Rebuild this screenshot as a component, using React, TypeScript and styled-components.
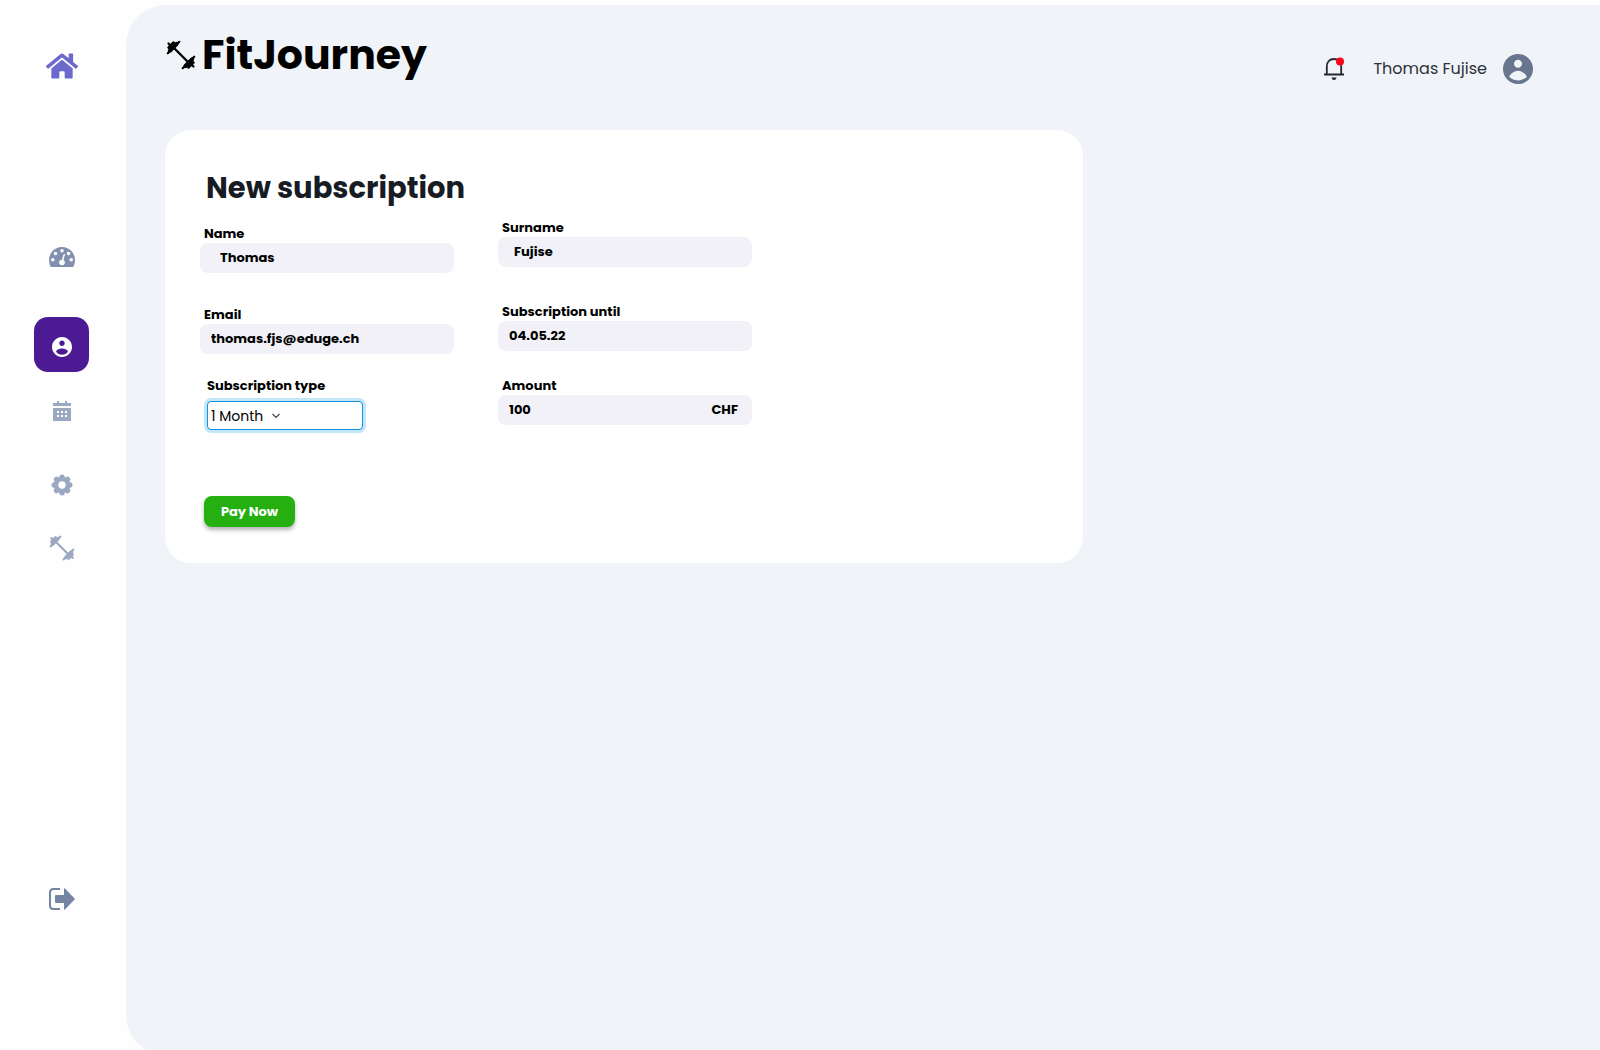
import React from "react";
import styled, { createGlobalStyle } from "styled-components";
import { FaHome } from "react-icons/fa";

const GlobalStyle = createGlobalStyle`
  *, *::before, *::after { box-sizing: border-box; }
  body {
    margin: 0;
    background: #fefefe;
    color: #000;
    font-family: Poppins, Inter, "Liberation Sans", sans-serif;
  }
  h1, p { margin: 0; }
  button, input, select { font: inherit; color: inherit; }
`;

const Page = styled.div`
  display: flex;
  height: 100vh;
  min-height: 700px;
  overflow: hidden;
`;

const Sidebar = styled.nav`
  display: flex;
  flex: 0 0 126px;
  flex-direction: column;
  padding: 38px 36px 124px 34px;
`;

const NavLink = styled.a<{ $gap?: number; $color: string; $active?: boolean; $last?: boolean }>`
  display: flex;
  flex: none;
  align-items: center;
  justify-content: center;
  width: 55px;
  height: 55px;
  margin-top: ${(p) => (p.$last ? "auto" : `${p.$gap ?? 0}px`)};
  padding-top: ${(p) => (p.$active ? 4 : 0)}px;
  border-radius: 14px;
  color: ${(p) => p.$color};
  background: ${(p) => (p.$active ? "#4c1b94" : "transparent")};
`;

const Main = styled.main`
  flex: 1;
  min-width: 0;
  margin: 5px 0 -5px;
  padding-left: 39px;
  border-radius: 40px 0 0 40px;
  background: #f0f3f8;
`;

const Header = styled.header`
  display: flex;
  justify-content: space-between;
  height: 125px;
  padding: 20px 67px 0 1px;
`;

const Brand = styled.p`
  display: flex;
  align-items: center;
  gap: 6px;
  height: 60px;
  font-size: 41px;
  font-weight: 700;
  line-height: 60px;
`;

const UserArea = styled.div`
  display: flex;
  align-items: center;
  height: 88px;
`;

const IconButton = styled.button`
  display: flex;
  padding: 0;
  border: 0;
  background: none;
  color: #68758f;
`;

const UserName = styled.span`
  margin: 0 16px 0 28px;
  font-size: 16px;
  line-height: 24px;
  color: #2c3138;
`;

const Card = styled.form`
  width: 64%;
  min-width: 640px;
  padding: 38px 34px 36px 35px;
  border-radius: 26px;
  background: #fff;
`;

const Title = styled.h1`
  padding-left: 6px;
  font-size: 29px;
  font-weight: 700;
  line-height: 40px;
  color: #171c24;
`;

const Columns = styled.div`
  display: flex;
  gap: 44px;
  padding-top: 11px;
`;

const Column = styled.div<{ $rise?: boolean }>`
  display: flex;
  flex-direction: column;
  width: 254px;
  padding-top: ${(p) => (p.$rise ? 0 : 6)}px;
`;

const Field = styled.div<{ $gap?: number }>`
  display: flex;
  flex-direction: column;
  margin-top: ${(p) => p.$gap ?? 0}px;
`;

const Label = styled.label<{ $indent?: number }>`
  padding-left: ${(p) => p.$indent ?? 4}px;
  font-size: 13px;
  font-weight: 700;
  line-height: 18px;
`;

const InputBox = styled.div<{ $indent?: number }>`
  display: flex;
  align-items: center;
  height: 30px;
  padding: 0 14px 0 ${(p) => p.$indent ?? 11}px;
  border-radius: 8px;
  background: #f1f1f7;
  font-size: 13px;
  font-weight: 700;
`;

const Input = styled.input`
  flex: 1;
  min-width: 0;
  height: 28px;
  padding: 0;
  border: 0;
  outline: 0;
  background: none;
`;

const SelectBox = styled.div`
  position: relative;
  width: 156px;
  margin: 6px 0 0 7px;

  svg {
    position: absolute;
    top: 11px;
    left: 64px;
    pointer-events: none;
  }
`;

const Select = styled.select`
  display: block;
  width: 100%;
  height: 29px;
  padding: 0 3px;
  border: 1px solid #0d92dd;
  border-radius: 4px;
  outline: 0;
  background: #fff;
  box-shadow: 0 0 0 3px #c5e6f9;
  font-size: 14px;
  appearance: none;
`;

const PayButton = styled.button`
  width: 91px;
  height: 31px;
  margin: 66px 0 0 4px;
  padding: 0;
  border: 0;
  border-radius: 8px;
  background: #25af10;
  box-shadow: 0 3px 4px rgba(0, 0, 0, 0.3);
  color: #fff;
  font-size: 13px;
  font-weight: 700;
`;

const Dumbbell = ({ size }: { size: number }) => (
  <svg width={size} height={size} viewBox="0 0 30 30" fill="none" stroke="currentColor" strokeLinecap="round" aria-hidden="true">
    <path d="M7 7 23 23" strokeWidth="2.4" />
    <path d="M4 10.500 10.500 4M19.500 26 26 19.500" strokeWidth="4.200" />
    <path d="M2.800 7.500 7.500 2.800M22.500 27.200 27.200 22.500" strokeWidth="3" />
    <path d="M1.800 13.300 4 11M13.300 1.800 11 4M16.700 28.200 19 26M28.200 16.700 26 19M2.500 3.500 5 6M25 24 27.500 26.500" strokeWidth="2.200" />
  </svg>
);

const Gauge = () => (
  <svg width="26" height="20" viewBox="0 0 26 20" aria-hidden="true">
    <path d="M1.800 20Q0 17 0 13a13 13 0 0 1 26 0q0 4-1.800 7z" fill="currentColor" />
    <g fill="#fff">
      <circle cx="13" cy="3.800" r="1.800" />
      <circle cx="6.500" cy="6.500" r="1.800" />
      <circle cx="19.500" cy="6.500" r="1.800" />
      <circle cx="3.800" cy="12.800" r="1.800" />
      <circle cx="22.200" cy="12.800" r="1.800" />
      <circle cx="13" cy="15.500" r="2.800" />
    </g>
    <path d="M13 15 15.200 7.800" stroke="#fff" strokeWidth="1.500" strokeLinecap="round" />
  </svg>
);

const Account = ({ size }: { size: number }) => (
  <svg width={size} height={size} viewBox="2 2 20 20" fill="currentColor" aria-hidden="true">
    <path d="M12 2C6.48 2 2 6.48 2 12s4.480 10 10 10 10-4.480 10-10S17.520 2 12 2zm0 3.800c1.500 0 2.700 1.200 2.700 2.700s-1.200 2.700-2.700 2.700-2.700-1.200-2.700-2.700 1.200-2.700 2.700-2.700zm0 13.800c-2.300 0-4.400-.9-5.900-2.400.8-2.300 3.900-4.100 5.900-4.100s5.100 1.800 5.900 4.100c-1.500 1.500-3.600 2.400-5.900 2.400z" />
  </svg>
);

const AccountSmall = () => (
  <svg width="20" height="20" viewBox="2 2 20 20" fill="currentColor" aria-hidden="true">
    <path d="M12 2C6.480 2 2 6.480 2 12s4.480 10 10 10 10-4.480 10-10S17.520 2 12 2zm0 3.500c1.500 0 2.700 1.200 2.700 2.700s-1.200 2.700-2.700 2.700-2.700-1.200-2.700-2.700 1.200-2.700 2.700-2.700zm0 14.200c-2.500 0-4.600-1.100-5.900-2.900.1-2.200 4-3.300 5.900-3.300s5.800 1.100 5.900 3.300c-1.300 1.800-3.400 2.900-5.900 2.900z" />
  </svg>
);

const Calendar = () => (
  <svg width="18" height="20" viewBox="0 0 18 20" fill="currentColor" aria-hidden="true">
    <path d="M0 2h4V0h2v2h6V0h2v2h4v3H0z" />
    <path fillRule="evenodd" d="M0 7h18v13H0zM4 10v2h2v-2zM8 10v2h2v-2zM12 10v2h2v-2zM4 14v2h2v-2zM8 14v2h2v-2zM12 14v2h2v-2z" />
  </svg>
);

const Gear = () => (
  <svg width="22" height="22" viewBox="-11 -11 22 22" fill="currentColor" aria-hidden="true">
    <circle r="6" fill="none" stroke="currentColor" strokeWidth="4.600" />
    {[0, 45, 90, 135, 180, 225, 270, 315].map((angle) => (
      <circle key={angle} cy="-7.800" r="2.700" transform={`rotate(${angle})`} />
    ))}
  </svg>
);

const Logout = () => (
  <svg width="26" height="22" viewBox="0 0 26 22" aria-hidden="true">
    <path d="M11 1H4.500Q1 1 1 4.500v13Q1 21 4.500 21H11" fill="none" stroke="currentColor" strokeWidth="2" />
    <path d="M7 7h8V1q0-1 1-.5L26 11 16 21.500q-1 .5-1-.5v-6H7q-1 0-1-1V8q0-1 1-1z" fill="currentColor" />
  </svg>
);

const Bell = () => (
  <svg width="22" height="24" viewBox="0 0 22 24" fill="none" aria-hidden="true">
    <path d="M1 17.500h20M3.800 17.500V9.500C3.800 5 6.500 2 11 2s7.200 3 7.200 7.500v8" stroke="#23282f" strokeWidth="1.800" strokeLinejoin="round" />
    <path d="M8.500 20.500h5q-.5 2.500-2.500 2.500t-2.500-2.500z" fill="#23282f" />
    <circle cx="17" cy="4.500" r="4" fill="#ff0019" />
  </svg>
);

const Chevron = () => (
  <svg width="10" height="8" viewBox="0 0 10 8" fill="none" aria-hidden="true">
    <path d="M1.500 2 5 5.500 8.500 2" stroke="#444" strokeWidth="1.200" />
  </svg>
);

interface TextFieldProps {
  id: string;
  label: string;
  value: string;
  type?: string;
  gap?: number;
  indent?: number;
  unit?: string;
}

const TextField = ({ id, label, value, type = "text", gap, indent, unit }: TextFieldProps) => (
  <Field $gap={gap}>
    <Label htmlFor={id}>{label}</Label>
    <InputBox $indent={indent}>
      <Input id={id} type={type} defaultValue={value} />
      {unit && <span>{unit}</span>}
    </InputBox>
  </Field>
);

export default function App() {
  return (
    <>
      <GlobalStyle />
      <Page>
        <Sidebar aria-label="Main">
          <NavLink href="#home" aria-label="Home" $color="#6b69ce"><FaHome size={32} /></NavLink>
          <NavLink href="#dashboard" aria-label="Dashboard" $gap={136} $color="#8190b0"><Gauge /></NavLink>
          <NavLink href="#account" aria-label="Account" aria-current="page" $gap={33} $color="#fff" $active><AccountSmall /></NavLink>
          <NavLink href="#calendar" aria-label="Calendar" $gap={11} $color="#9ba8c2"><Calendar /></NavLink>
          <NavLink href="#settings" aria-label="Settings" $gap={19} $color="#9ba8c2"><Gear /></NavLink>
          <NavLink href="#workouts" aria-label="Workouts" $gap={8} $color="#9ba8c2"><Dumbbell size={26} /></NavLink>
          <NavLink href="#logout" aria-label="Log out" $color="#7584a3" $last><Logout /></NavLink>
        </Sidebar>
        <Main>
          <Header>
            <Brand><Dumbbell size={30} />FitJourney</Brand>
            <UserArea>
              <IconButton type="button" aria-label="Notifications"><Bell /></IconButton>
              <UserName>Thomas Fujise</UserName>
              <IconButton type="button" aria-label="Profile"><Account size={30} /></IconButton>
            </UserArea>
          </Header>
          <Card onSubmit={(event) => event.preventDefault()}>
            <Title>New subscription</Title>
            <Columns>
              <Column>
                <TextField id="name" label="Name" value="Thomas" indent={20} />
                <TextField id="email" label="Email" type="email" value="thomas.fjs@eduge.ch" gap={33} />
                <Field $gap={23}>
                  <Label htmlFor="plan" $indent={7}>Subscription type</Label>
                  <SelectBox>
                    <Select id="plan" defaultValue="1">
                      <option value="1">1 Month</option>
                    </Select>
                    <Chevron />
                  </SelectBox>
                </Field>
              </Column>
              <Column $rise>
                <TextField id="surname" label="Surname" value="Fujise" indent={16} />
                <TextField id="until" label="Subscription until" value="04.05.22" gap={36} />
                <TextField id="amount" label="Amount" value="100" unit="CHF" gap={26} />
              </Column>
            </Columns>
            <PayButton type="submit">Pay Now</PayButton>
          </Card>
        </Main>
      </Page>
    </>
  );
}
